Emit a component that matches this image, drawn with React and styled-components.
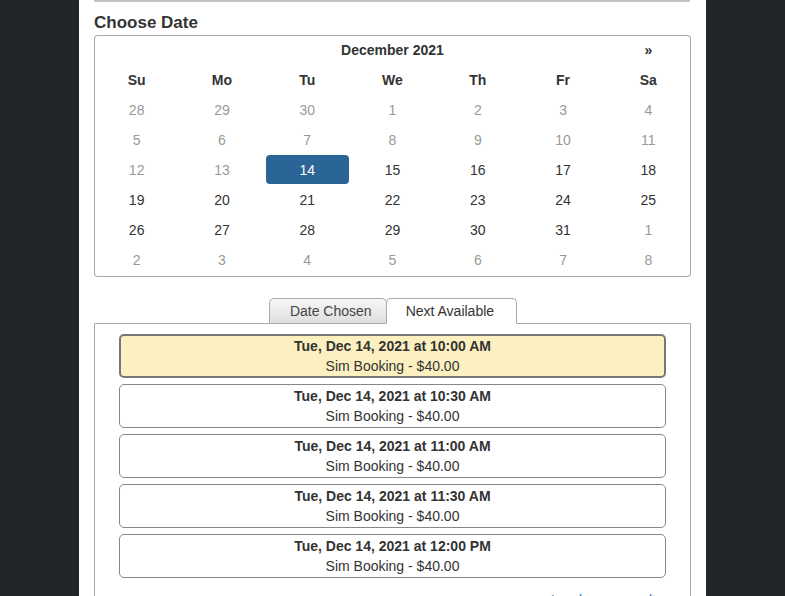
import React from "react";
import styled, { createGlobalStyle } from "styled-components";

const Global = createGlobalStyle`
  html, body { margin: 0; padding: 0; background: #232629; }
  body { font-family: "Liberation Sans", Arial, sans-serif; font-size: 14px; color: #333; }
`;

const Page = styled.div`
  display: flex;
  justify-content: center;
  height: 596px;
  background: #232629;
`;

const Panel = styled.div`
  width: 597px;
  padding: 0 15px;
  background: #fff;
  height: 596px;
  overflow: hidden;
`;

const Rule = styled.div`
  height: 0;
  border-top: 2px solid #c4c4c4;
  margin-right: 1px;
`;

const Heading = styled.h3`
  margin: 11px 0 2px;
  font-size: 17px;
  line-height: 20px;
  font-weight: bold;
  color: #333;
`;

const Calendar = styled.div`
  box-shadow: inset 0 0 0 1px #aaa;
  border-radius: 4px;
  display: grid;
  grid-template-columns: repeat(7, 1fr);
  grid-auto-rows: 30px;
  padding-bottom: 2px;
`;

const Title = styled.div`
  grid-column: 2 / 7;
  display: flex;
  align-items: center;
  justify-content: center;
  font-weight: bold;
`;

const Nav = styled.div`
  grid-column: ${(p) => p.$col};
  display: flex;
  align-items: center;
  justify-content: center;
  font-weight: bold;
`;

const DayName = styled.div`
  display: flex;
  align-items: center;
  justify-content: center;
  font-weight: bold;
`;

const DateCell = styled.div`
  display: flex;
  align-items: center;
  justify-content: center;
  margin: 0 1px 1px;
  border-radius: 4px;
  color: ${(p) => (p.$active ? "#fff" : p.$muted ? "#999" : "#333")};
  background: ${(p) => (p.$active ? "#2b6497" : "transparent")};
`;

const Tabs = styled.div`
  display: flex;
  justify-content: center;
  margin-top: 21px;
  padding-left: 1px;
  position: relative;
  z-index: 1;
`;

const Tab = styled.div`
  height: 24px;
  padding: ${(p) => (p.$active ? "0 22px 0 19px" : "0 14px 0 20px")};
  display: flex;
  align-items: center;
  border: 1px solid #aaa;
  border-bottom: ${(p) => (p.$active ? "1px solid #fff" : "1px solid #aaa")};
  border-radius: 5px 5px 0 0;
  background: ${(p) => (p.$active ? "#fff" : "linear-gradient(#f7f7f7, #dedede)")};
  color: ${(p) => (p.$active ? "#333" : "#444")};
  margin-left: ${(p) => (p.$active ? "-1px" : "0")};
  font-size: 14px;
`;

const TabPanel = styled.div`
  margin-top: -1px;
  border: 1px solid #aaa;
  border-radius: 0 0 4px 4px;
  padding: 10px 24px 0 24px;
  min-height: 300px;
`;

const Slot = styled.div`
  height: 40px;
  border: ${(p) => (p.$selected ? "2px solid #777" : "1px solid #888")};
  padding: ${(p) => (p.$selected ? "0" : "1px 0")};
  border-radius: 5px;
  background: ${(p) => (p.$selected ? "#fcf0c0" : "#fff")};
  margin-bottom: 6px;
  display: flex;
  flex-direction: column;
  align-items: center;
  line-height: 20px;
`;

const SlotTime = styled.div`
  font-weight: bold;
  color: #333;
`;

const SlotDesc = styled.div`
  color: #333;
`;

const More = styled.div`
  display: flex;
  justify-content: flex-end;
  padding: 6px 3px 0 0;
  line-height: 20px;
`;

const MoreLink = styled.a`
  color: #337ab7;
  text-decoration: none;
`;

const dayNames = ["Su", "Mo", "Tu", "We", "Th", "Fr", "Sa"];

const weeks = [
  [[28, 1], [29, 1], [30, 1], [1, 1], [2, 1], [3, 1], [4, 1]],
  [[5, 1], [6, 1], [7, 1], [8, 1], [9, 1], [10, 1], [11, 1]],
  [[12, 1], [13, 1], [14, 2], [15, 0], [16, 0], [17, 0], [18, 0]],
  [[19, 0], [20, 0], [21, 0], [22, 0], [23, 0], [24, 0], [25, 0]],
  [[26, 0], [27, 0], [28, 0], [29, 0], [30, 0], [31, 0], [1, 1]],
  [[2, 1], [3, 1], [4, 1], [5, 1], [6, 1], [7, 1], [8, 1]],
];

const slots = ["10:00 AM", "10:30 AM", "11:00 AM", "11:30 AM", "12:00 PM"];

export default function App() {
  return (
    <>
      <Global />
      <Page>
        <Panel>
          <Rule />
          <Heading>Choose Date</Heading>
          <Calendar>
            <Title>December 2021</Title>
            <Nav $col={7}>»</Nav>
            {dayNames.map((d) => (
              <DayName key={d}>{d}</DayName>
            ))}
            {weeks.flat().map(([n, s], i) => (
              <DateCell key={i} $muted={s === 1} $active={s === 2}>
                {n}
              </DateCell>
            ))}
          </Calendar>
          <Tabs>
            <Tab>Date Chosen</Tab>
            <Tab $active>Next Available</Tab>
          </Tabs>
          <TabPanel>
            {slots.map((t, i) => (
              <Slot key={t} $selected={i === 0}>
                <SlotTime>Tue, Dec 14, 2021 at {t}</SlotTime>
                <SlotDesc>Sim Booking - $40.00</SlotDesc>
              </Slot>
            ))}
            <More>
              <MoreLink href="#">Load more results</MoreLink>
            </More>
          </TabPanel>
        </Panel>
      </Page>
    </>
  );
}
